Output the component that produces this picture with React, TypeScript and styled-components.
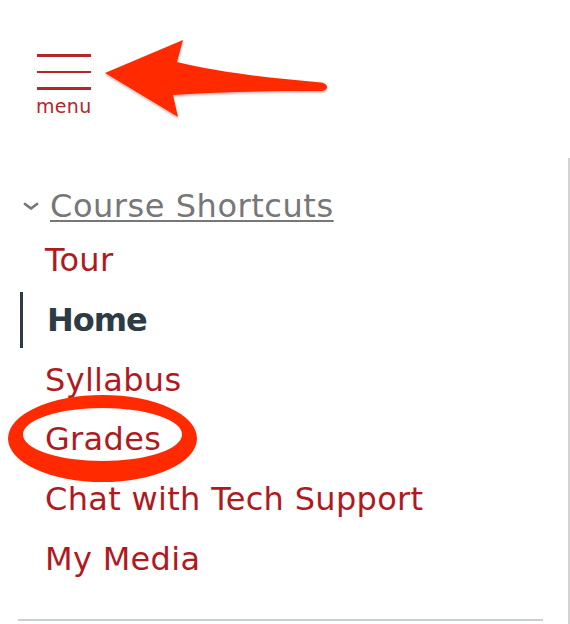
import React from "react";
import styled, { createGlobalStyle } from "styled-components";

const GlobalStyle = createGlobalStyle`
  html, body { margin: 0; padding: 0; background: #ffffff; }
  body { font-family: "DejaVu Sans", "Liberation Sans", sans-serif; }
  * { box-sizing: border-box; }
`;

const Page = styled.div`
  position: relative;
  width: 570px;
  height: 624px;
  overflow: hidden;
  background: #ffffff;
`;

const Header = styled.header`
  height: 158px;
  padding: 54px 0 0 36px;
`;

const MenuButton = styled.button`
  display: flex;
  flex-direction: column;
  align-items: center;
  padding: 0;
  margin: 0;
  border: none;
  background: transparent;
  color: #b2272b;
  cursor: pointer;
`;

const Bars = styled.span`
  display: flex;
  flex-direction: column;
  gap: 14px;
  width: 54px;
  margin-left: 1px;
`;

const Bar = styled.span`
  display: block;
  height: 2.5px;
  background: #b2272b;
`;

const MenuLabel = styled.span`
  font-family: "DejaVu Sans", sans-serif;
  font-size: 19px;
  line-height: 22px;
  margin-top: 5px;
  letter-spacing: 0.3px;
  color: #b2272b;
`;

const Nav = styled.nav`
  width: 570px;
  height: 466px;
  border-right: 2px solid #d3d3d3;
  padding-top: 32px;
`;

const HeadingRow = styled.div`
  display: flex;
  align-items: center;
  height: 32px;
  padding-left: 23px;
  gap: 11px;
  margin-bottom: 10.3px;
`;

const Chevron = styled.svg`
  width: 16px;
  height: 8px;
  flex: none;
`;

const HeadingLink = styled.a`
  font-size: 32px;
  line-height: 32px;
  letter-spacing: 0.55px;
  color: #777777;
  text-decoration: underline;
  text-decoration-thickness: 2px;
  text-underline-offset: 3px;
`;

const List = styled.ul`
  list-style: none;
  margin: 0 0 0 20px;
  padding: 0;
  display: flex;
  flex-direction: column;
  gap: 3.7px;
`;

const Item = styled.li<{ $active?: boolean }>`
  height: 56px;
  display: flex;
  align-items: center;
  padding-left: ${(p) => (p.$active ? "24px" : "25px")};
  border-left: ${(p) => (p.$active ? "3.5px solid #2d3b45" : "none")};
`;

const ItemLink = styled.a<{ $active?: boolean }>`
  font-size: 32px;
  line-height: 32px;
  font-weight: ${(p) => (p.$active ? 700 : 400)};
  letter-spacing: ${(p) => (p.$active ? "-1px" : "0.32px")};
  color: ${(p) => (p.$active ? "#2d3b45" : "#b01a1f")};
  text-decoration: none;
  white-space: nowrap;
`;

const Divider = styled.hr`
  border: none;
  height: 2px;
  background: #c9ced2;
  width: 525px;
  margin: 32px 0 0 18px;
`;

const Annotations = styled.svg`
  position: absolute;
  left: 0;
  top: 0;
  width: 570px;
  height: 624px;
  pointer-events: none;
`;

const items = [
  { label: "Tour" },
  { label: "Home", active: true },
  { label: "Syllabus" },
  { label: "Grades" },
  { label: "Chat with Tech Support" },
  { label: "My Media" },
];

export default function App() {
  return (
    <>
      <GlobalStyle />
      <Page>
        <Header>
          <MenuButton aria-label="menu">
            <Bars>
              <Bar />
              <Bar />
              <Bar />
            </Bars>
            <MenuLabel>menu</MenuLabel>
          </MenuButton>
        </Header>
        <Nav>
          <HeadingRow>
            <Chevron viewBox="0 0 16 8">
              <polyline
                points="2,2 8,6.5 14,2"
                fill="none"
                stroke="#777777"
                strokeWidth="2.8"
                strokeLinecap="round"
                strokeLinejoin="round"
              />
            </Chevron>
            <HeadingLink href="#">Course Shortcuts</HeadingLink>
          </HeadingRow>
          <List>
            {items.map((it) => (
              <Item key={it.label} $active={it.active}>
                <ItemLink href="#" $active={it.active}>
                  {it.label}
                </ItemLink>
              </Item>
            ))}
          </List>
          <Divider />
        </Nav>
        <Annotations viewBox="0 0 570 624">
          <defs>
            <filter id="shadow" x="-10%" y="-10%" width="120%" height="140%">
              <feDropShadow dx="0" dy="1.5" stdDeviation="1.2" floodColor="#000" floodOpacity="0.3" />
            </filter>
          </defs>
          <path
            filter="url(#shadow)"
            fill="#ff2a00"
            d="M105,73 L183,40 L177,62 C205,69 250,76 290,79.5 L321,82.5 C326,83 327.5,86.5 327,87.5 C326.5,90 324,91 321,91 L290,91 C250,91.5 210,92.5 173,95 L178,117 Z"
          />
          <path
            fill="#ff2a00"
            fillRule="evenodd"
            d="M8,438.5 A94.5,43.5 0 1,0 197,438.5 A94.5,43.5 0 1,0 8,438.5 Z M23,434.5 A79.5,26.5 0 1,1 182,434.5 A79.5,26.5 0 1,1 23,434.5 Z"
          />
        </Annotations>
      </Page>
    </>
  );
}
